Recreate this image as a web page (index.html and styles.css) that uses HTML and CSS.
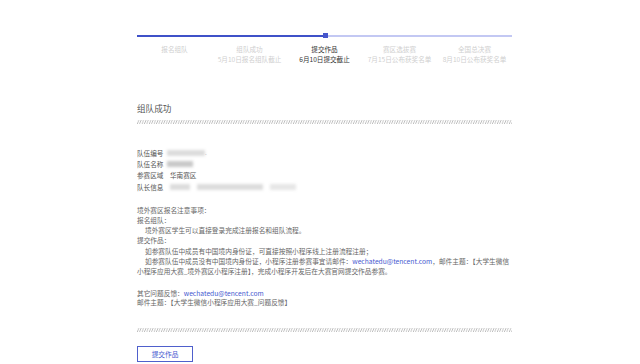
FILE: index.html
```html
<!DOCTYPE html>
<html lang="zh">
<head>
<meta charset="utf-8">
<link rel="stylesheet" href="styles.css">
</head>
<body>
<div class="page">
  <div class="track">
    <div class="done"></div>
    <div class="node"></div>
    <div class="rest"></div>
  </div>
  <div class="steps">
    <div class="step"><div>报名组队</div></div>
    <div class="step"><div>组队成功</div><div>5月10日报名组队截止</div></div>
    <div class="step current"><div>提交作品</div><div>6月10日提交截止</div></div>
    <div class="step"><div>赛区选拔赛</div><div>7月15日公布获奖名单</div></div>
    <div class="step"><div>全国总决赛</div><div>8月10日公布获奖名单</div></div>
  </div>

  <div class="title">组队成功</div>
  <svg class="hatch" width="375" height="4" viewBox="0 0 375 4">
    <defs>
      <pattern id="sl" width="2.4" height="4" patternUnits="userSpaceOnUse">
        <line x1="0.2" y1="4" x2="1.8" y2="0" stroke="#9a9a9a" stroke-width="0.65"/>
      </pattern>
    </defs>
    <rect width="375" height="4" fill="url(#sl)"/>
  </svg>

  <div class="info">
    <div class="row"><span class="label">队伍编号</span><span class="blur w38"></span><span class="dot">.</span></div>
    <div class="row"><span class="label">队伍名称</span><span class="blur w26 dark"></span></div>
    <div class="row"><span class="label">参赛区域</span><span class="val">华南赛区</span></div>
    <div class="row"><span class="label">队长信息</span><span class="blur w20"></span><span class="blur w66"></span><span class="blur w26 light"></span></div>
  </div>

  <div class="notes">
    <p>境外赛区报名注意事项：</p>
    <p>报名组队：</p>
    <p class="ind">境外赛区学生可以直接登录完成注册报名和组队流程。</p>
    <p>提交作品：</p>
    <p class="ind">如参赛队伍中成员有中国境内身份证，可直接按照小程序线上注册流程注册；</p>
    <p class="ind"><span>如参赛队伍中成员没有中国境内身份证，小程序注册参赛事宜请邮件：</span><span class="link">wechatedu@tencent.com</span><span>，邮件主题：【大学生微信</span><br><span>小程序应用大赛_境外赛区小程序注册】，完成小程序开发后在大赛官网提交作品参赛。</span></p>
  </div>

  <div class="feedback">
    <p>其它问题反馈：<span class="link">wechatedu@tencent.com</span></p>
    <p>邮件主题：【大学生微信小程序应用大赛_问题反馈】</p>
  </div>

  <svg class="hatch bottom" width="375" height="4" viewBox="0 0 375 4">
    <rect width="375" height="4" fill="url(#sl)"/>
  </svg>

  <button class="submit">提交作品</button>
</div>
</body>
</html>
```

FILE: styles.css
```css
html, body {
  margin: 0;
  padding: 0;
  background: #fff;
}
body {
  font-family: "Noto Sans CJK SC", "Noto Sans", sans-serif;
  color: #666;
}
.page {
  width: 375px;
  margin-left: 137px;
  padding-top: 33px;
}
.track {
  display: flex;
  align-items: center;
  height: 5px;
}
.done {
  flex: 0 0 186px;
  height: 2px;
  background: #3f51c8;
}
.node {
  flex: 0 0 5px;
  height: 5px;
  background: #4656cc;
}
.rest {
  flex: 1;
  height: 2px;
  background: #c3c8f3;
}
.steps {
  display: grid;
  grid-template-columns: repeat(5, 1fr);
  margin-top: 6px;
}
.step {
  text-align: center;
  font-size: 6.6px;
  line-height: 10px;
  color: #cfcfcf;
  white-space: nowrap;
}
.step.current {
  color: #333;
}
.title {
  margin-top: 38px;
  font-size: 8.6px;
  line-height: 12px;
  color: #555;
}
.hatch {
  display: block;
  margin-top: 6px;
}
.hatch.bottom {
  margin-top: 20px;
}
.info {
  margin-top: 23px;
}
.row {
  display: flex;
  align-items: center;
  height: 11.4px;
  font-size: 6.6px;
  color: #555;
}
.label {
  flex: 0 0 30px;
}
.val {
  margin-left: 3px;
}
.blur {
  height: 6px;
  background: #dcdcdc;
  filter: blur(1.6px);
  margin-right: 7px;
}
.blur.dark { background: #c8c8c8; }
.blur.light { background: #e6e6e6; }
.w20 { width: 20px; margin-left: 3px; }
.w26 { width: 26px; }
.w38 { width: 38px; margin-right: 0; }
.w66 { width: 66px; }
.dot {
  color: #999;
  font-size: 6px;
}
.notes {
  margin-top: 12px;
  font-size: 6.7px;
  line-height: 10.3px;
  color: #666;
}
.notes p, .feedback p {
  margin: 0;
}
.ind {
  text-indent: 8px;
}
.link {
  color: #4558cf;
}
.feedback {
  margin-top: 12px;
  font-size: 6.7px;
  line-height: 9.8px;
  color: #666;
}
.submit {
  display: block;
  margin-top: 14px;
  width: 56px;
  height: 16px;
  padding: 0;
  border: 1px solid #4f60cc;
  background: #fff;
  color: #4558cf;
  font-family: "Noto Sans CJK SC", sans-serif;
  font-size: 6.7px;
  line-height: 14px;
  border-radius: 0;
}
```
